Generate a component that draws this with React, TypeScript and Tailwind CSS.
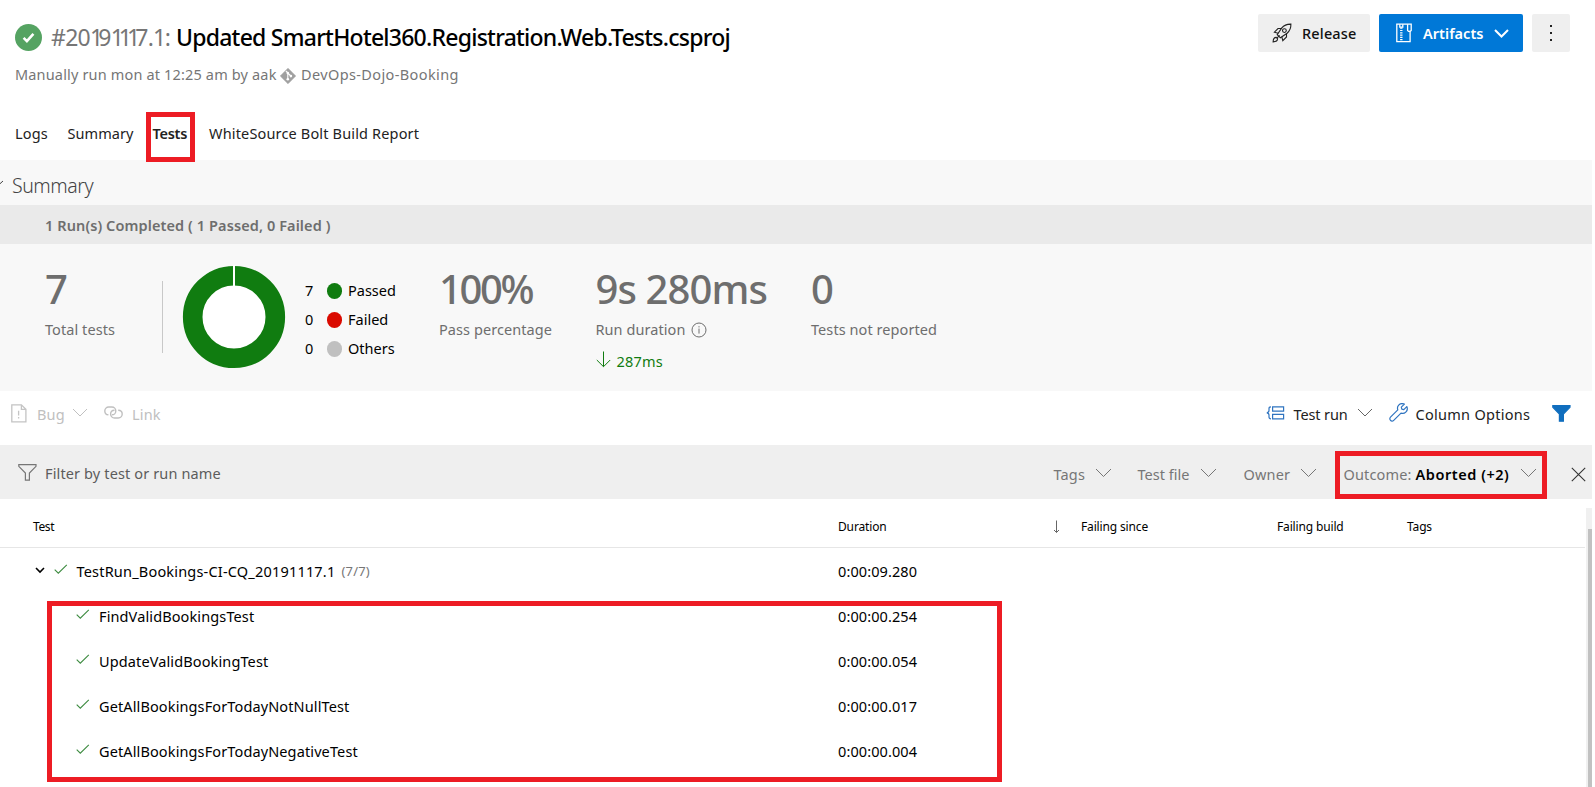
import type { ReactNode } from "react";

function Chevron({ className = "", w = 14, h = 7, sw = 1 }: { className?: string; w?: number; h?: number; sw?: number }) {
  return (
    <svg className={`shrink-0 ${className}`} width={w + 2} height={h + 3} viewBox={`-1 -1 ${w + 2} ${h + 3}`} fill="none" stroke="currentColor" strokeWidth={sw}>
      <path d={`M0 0L${w / 2} ${h}L${w} 0`} />
    </svg>
  );
}

function CheckMark({ className = "" }: { className?: string }) {
  return (
    <svg className={`shrink-0 text-[#3d8b40] ${className}`} width="14" height="11" viewBox="0 0 14 11" fill="none" stroke="currentColor" strokeWidth="1.1">
      <path d="M.7 5.6L4.3 9.2L12.8 .8" />
    </svg>
  );
}

function RocketIcon() {
  return (
    <svg className="shrink-0" width="20" height="20" viewBox="0 0 20 20" fill="none" stroke="#222" strokeWidth="1.1">
      <path d="M18.9 1.1C15.4 1 12 2.2 9.8 4.9L5.2 11.6L8.4 14.8L15.1 10.2C17.8 8 19 4.6 18.9 1.1Z" />
      <circle cx="12.4" cy="7.6" r="1.9" />
      <path d="M9.4 5.5H6L2.4 9.2L6.2 10.2M14.5 10.6V14L10.8 17.6L9.8 13.8M7.6 12.4L5.2 14.8" />
      <path d="M4.2 14.4C2.4 14.4 1.2 16 1.1 18.9C4 18.8 5.6 17.6 5.6 15.8Z" />
    </svg>
  );
}

function ArtifactIcon() {
  return (
    <svg className="shrink-0" width="16" height="20" viewBox="0 0 16 20" fill="none" stroke="#fff" strokeWidth="1.3">
      <path d="M.8 1.2H15.2V7.4L14.1 8.4V18.6H.8Z" />
      <path d="M11.6 1.2V7.4L12.6 8.4H14.1M3.8 1.2V4.2H6.8V1.2" />
      <path d="M5.3 4.6V17.6" strokeWidth="2.4" strokeDasharray="1.2 1.1" />
    </svg>
  );
}

function GitIcon() {
  return (
    <svg className="shrink-0" width="16" height="16" viewBox="0 0 16 16">
      <path d="M8 .3L15.7 8L8 15.7L.3 8Z" fill="#a0a0a0" stroke="#a0a0a0" strokeWidth=".6" strokeLinejoin="round" />
      <path d="M5.8 2.8L7.8 4.8V11.4M7.8 5L10.8 8" stroke="#fff" strokeWidth="1.1" fill="none" />
      <circle cx="7.8" cy="5" r="1.3" fill="#fff" />
      <circle cx="7.8" cy="11.3" r="1.3" fill="#fff" />
      <circle cx="10.9" cy="8.1" r="1.3" fill="#fff" />
    </svg>
  );
}

function BugFileIcon() {
  return (
    <svg className="shrink-0" width="16" height="19" viewBox="0 0 16 19" fill="none" stroke="#c4c4c4" strokeWidth="1.3">
      <path d="M.8 .8H10.4L14.9 5.3V17.9H.8ZM10.4 .8V5.3H14.9" />
      <path d="M7.6 6.8V11.4M7.6 13V14.6" />
    </svg>
  );
}

function LinkIcon() {
  return (
    <svg className="shrink-0" width="19" height="14" viewBox="0 0 19 14" fill="none" stroke="#c0c0c0" strokeWidth="1.4">
      <path d="M4.4 8.8C2.2 8.6 .8 6.9 .8 4.9C.8 2.7 2.5 1 4.7 1H7.9C10.1 1 11.8 2.7 11.8 4.9C11.8 7.1 10.1 8.8 7.9 8.8" />
      <path d="M14.2 4.2C16.6 4.2 18.2 5.9 18.2 8.1C18.2 10.3 16.5 12 14.3 12H10.5C8.3 12 6.6 10.3 6.6 8.1C6.6 5.9 8.3 4.3 10.5 4.2" />
    </svg>
  );
}

function GroupIcon() {
  return (
    <svg className="shrink-0" width="19" height="14" viewBox="0 0 19 14" fill="none" stroke="#2f74c0" strokeWidth="1.2">
      <path d="M6.6 .8H17.6V5.2H6.6ZM6.6 8.4H17.6V12.8H6.6Z" />
      <path d="M5 .8C3.4 .8 3 1.4 3 2.6V4.6C3 5.9 2.4 6.6 .8 6.8C2.4 7 3 7.7 3 9V11C3 12.2 3.4 12.8 5 12.8" />
    </svg>
  );
}

function WrenchIcon() {
  return (
    <svg className="shrink-0" width="19" height="19" viewBox="0 0 19 19" fill="none" stroke="#2f74c0" strokeWidth="1.2" strokeLinejoin="round">
      <path d="M15.4 1.1C13.4 .2 11.1 .6 9.7 2.1C8.5 3.4 8.2 5.2 8.8 6.9L1.5 14.2C.6 15.1 .6 16.6 1.5 17.4C2.3 18.3 3.8 18.3 4.7 17.4L12 10.1C13.7 10.7 15.5 10.4 16.8 9.1C18.3 7.7 18.6 5.4 17.8 3.6L14.8 6.6L12.8 6.1L12.3 4.1Z" />
    </svg>
  );
}

function FunnelIcon({ filled = false }: { filled?: boolean }) {
  return (
    <svg className="shrink-0" width="19" height="17" viewBox="0 0 19 17" fill={filled ? "#106ebe" : "none"} stroke={filled ? "#106ebe" : "#767676"} strokeWidth="1.2">
      <path d="M.8 .7H18V2.3L11.4 9V16.2H7.4V9L.8 2.3Z" />
    </svg>
  );
}

function DonutChart() {
  return (
    <svg className="shrink-0" width="104" height="104" viewBox="0 0 104 104">
      <circle cx="52" cy="52" r="41.3" fill="#fff" stroke="#107c10" strokeWidth="19.6" />
      <path d="M52 0V21" stroke="#fff" strokeWidth="2" />
    </svg>
  );
}

function LegendRow({ count, label, dot }: { count: number; label: string; dot: string }) {
  return (
    <div className="flex h-[29.3px] items-center text-black">
      <span className="-mt-[2px] w-[21.5px]">{count}</span>
      <span className={`mr-[6.5px] h-4 w-[15px] rounded-full ${dot}`} />
      <span className="-mt-[2px] tracking-normal">{label}</span>
    </div>
  );
}

function Stat({ value, label, className, valueClass = "", children }: { value: string; label: ReactNode; className: string; valueClass?: string; children?: ReactNode }) {
  return (
    <div className={`shrink-0 pt-[25px] text-[#6e6e6e] ${className}`}>
      <div className={`text-[40px] leading-[40px] font-medium ${valueClass}`}>{value}</div>
      <div className="mt-2 flex h-6 items-center tracking-[0.07px]">{label}</div>
      {children}
    </div>
  );
}

const tests = [
  { name: "FindValidBookingsTest", duration: "0:00:00.254" },
  { name: "UpdateValidBookingTest", duration: "0:00:00.054" },
  { name: "GetAllBookingsForTodayNotNullTest", duration: "0:00:00.017" },
  { name: "GetAllBookingsForTodayNegativeTest", duration: "0:00:00.004" },
];

function One({ last = false }: { last?: boolean }) {
  return <span className={last ? "tracking-[-1.5px]" : "tracking-[-5px]"}>1</span>;
}

export default function App() {
  return (
    <div className="relative h-[787px] w-[1595px] overflow-hidden bg-white font-['Noto_Sans','Open_Sans',sans-serif] text-[14.5px] leading-6 tracking-[0.16px] whitespace-nowrap text-[#222]">
      <header className="flex h-[106px] items-start justify-between pt-[14px] pr-[25px] pl-[15px]">
        <div>
          <div className="flex h-[46px] items-center">
            <svg className="mr-[9px] shrink-0" width="27" height="27" viewBox="0 0 27 27">
              <circle cx="13.5" cy="13.5" r="13.5" fill="#55a362" />
              <path d="M8.6 13.9L11.9 17.1L18.4 9.9" fill="none" stroke="#fff" strokeWidth="2.6" />
            </svg>
            <h1 className="flex text-[23px] leading-[46px]">
              <span className="w-[125px] tracking-[-0.7px] text-[#767676]">
                #20<One />9<One /><One /><One />7.<One last />:
              </span>
              <span className="font-medium tracking-[-0.76px] text-black">Updated SmartHotel360.Registration.Web.Tests.csproj</span>
            </h1>
          </div>
          <div className="flex h-[30px] items-center pb-[2px] text-[#767676]">
            <span className="w-[265px]">Manually run mon at 12:25 am by aak</span>
            <span className="mt-[3px]">
              <GitIcon />
            </span>
            <span className="ml-[5px] tracking-[0.38px]">DevOps-Dojo-Booking</span>
          </div>
        </div>
        <div className="flex gap-[9px] text-[#111]">
          <button className="flex h-[38px] w-[112px] items-center rounded-xs bg-[#efefef] pl-[14px] font-medium">
            <RocketIcon />
            <span className="ml-[10px]">Release</span>
          </button>
          <button className="flex h-[38px] w-36 items-center rounded-xs bg-[#0078d7] pl-[17px] font-semibold text-white">
            <ArtifactIcon />
            <span className="ml-[11px] w-[71px] text-left tracking-[0.03px]">Artifacts</span>
            <Chevron className="mt-[2px]" w={13} h={6.5} sw={2} />
          </button>
          <button aria-label="More actions" className="flex h-[38px] w-[38px] flex-col items-center justify-center gap-[5px] rounded-xs bg-[#efefef]">
            <span className="size-0.5 bg-[#222]" />
            <span className="size-0.5 bg-[#222]" />
            <span className="size-0.5 bg-[#222]" />
          </button>
        </div>
      </header>

      <nav className="flex h-[54px] items-center pb-px pl-[15px]">
        <span className="w-[52.5px]">Logs</span>
        <span className="w-[85px] tracking-[0.06px]">Summary</span>
        <span className="relative w-[56.5px] font-semibold tracking-[-0.28px]">
          Tests
          <span className="absolute -top-[9px] -left-[6.5px] h-[50px] w-[49px] border-5 border-[#ed1c24]" />
        </span>
        <span>WhiteSource Bolt Build Report</span>
      </nav>

      <section className="w-[1592px] bg-[#f8f8f8]">
        <div className="flex h-[45px] items-center pt-[7px] text-[19.5px] font-light tracking-[-0.45px] text-[#444]">
          <Chevron className="-mt-1 mr-[8px] -ml-[9px]" w={11} h={5} />
          <span>Summary</span>
        </div>
        <div className="flex h-[39px] items-center bg-[#eaeaea] pl-[45px] font-semibold tracking-[0.1px] text-[#6e6e6e]">1 Run(s) Completed ( 1 Passed, 0 Failed )</div>
        <div className="flex h-[147px] pl-[45px]">
          <Stat className="w-[117px]" value="7" label="Total tests" />
          <div className="mt-[37px] h-[72px] w-px bg-[#c8c8c8]" />
          <div className="mt-[21px] ml-[19px]">
            <DonutChart />
          </div>
          <div className="mt-8 ml-[19px] w-[134px]">
            <LegendRow count={7} label="Passed" dot="bg-[#107c10]" />
            <LegendRow count={0} label="Failed" dot="bg-[#da0a00]" />
            <LegendRow count={0} label="Others" dot="bg-[#c0c0c0]" />
          </div>
          <Stat className="w-[156.5px]" value="100%" valueClass="tracking-[-2.4px]" label="Pass percentage" />
          <Stat
            className="w-[215.5px]"
            value="9s 280ms"
            valueClass="tracking-[-0.9px]"
            label={
              <>
                <span className="w-[95px]">Run duration</span>
                <svg className="mt-px" width="16" height="16" viewBox="0 0 16 16" fill="none" stroke="currentColor">
                  <circle cx="8" cy="8" r="7" />
                  <path d="M8 6.6V11.6M8 4.2V5.4" />
                </svg>
              </>
            }
          >
            <div className="mt-2 flex h-6 items-center tracking-[0.2px] text-[#107c10]">
              <svg className="-mt-1 mr-[6px]" width="15" height="17" viewBox="0 0 15 17" fill="none" stroke="currentColor">
                <path d="M7.5 .5V15.6M.8 9L7.5 15.7L14.2 9" />
              </svg>
              287ms
            </div>
          </Stat>
          <Stat className="" value="0" label="Tests not reported" />
        </div>
      </section>

      <div className="flex h-[54px] w-[1592px] items-center justify-between pr-[21px] pb-[9px] pl-[11px]">
        <div className="flex items-center text-[#c0c0c0]">
          <BugFileIcon />
          <span className="ml-[10px] w-[35px]">Bug</span>
          <Chevron className="-mt-px" />
          <span className="-mt-px ml-4">
            <LinkIcon />
          </span>
          <span className="ml-[9px]">Link</span>
        </div>
        <div className="flex items-center">
          <span className="-mt-[2px]">
            <GroupIcon />
          </span>
          <span className="ml-[9px] w-[63px] tracking-[-0.12px]">Test run</span>
          <Chevron className="-mt-px text-[#666]" />
          <span className="-mt-[3px] ml-4">
            <WrenchIcon />
          </span>
          <span className="ml-2 w-[136.5px] tracking-[0.28px]">Column Options</span>
          <FunnelIcon filled />
        </div>
      </div>

      <div className="flex h-[54px] w-[1592px] items-center justify-between bg-[#efefef] pt-[3px] pr-[6px] pl-[18px] text-[#767676]">
        <div className="-mt-[2px] flex items-center">
          <FunnelIcon />
          <span className="ml-2 tracking-[0.13px] text-[#5c5c5c]">Filter by test or run name</span>
        </div>
        <div className="flex items-center pt-px">
          <span className="w-[41px]">Tags</span>
          <Chevron className="-mt-px" w={15} h={7.5} />
          <span className="ml-[26px] w-[62.5px] tracking-normal">Test file</span>
          <Chevron className="-mt-px" w={15} h={7.5} />
          <span className="ml-[26.5px] w-[56px]">Owner</span>
          <Chevron className="-mt-px" w={15} h={7.5} />
          <div className="relative ml-[27px] flex items-center">
            <span className="w-[72px]">Outcome:</span>
            <span className="w-[104.5px] font-semibold tracking-[0.55px] text-black">Aborted (+2)</span>
            <Chevron className="-mt-px" w={15} h={7.5} />
            <span className="absolute -top-[11px] -left-[8.5px] h-12 w-[212px] border-5 border-[#ed1c24]" />
          </div>
          <svg className="mt-px ml-[34px]" width="15" height="15" viewBox="0 0 15 15" fill="none" stroke="#333" strokeWidth="1.1">
            <path d="M.8 .8L14.2 14.2M14.2 .8L.8 14.2" />
          </svg>
        </div>
      </div>

      <div className="flex">
        <div className="w-[1585px] text-black">
          <div className="flex h-[49px] items-center border-b border-[#e6e6e6] pt-[8px] pl-[33px] text-xs tracking-[-0.15px]">
            <span className="w-[805px] tracking-[-0.4px]">Test</span>
            <span className="w-[215px]">Duration</span>
            <svg className="-mt-px mr-[20px]" width="8" height="14" viewBox="0 0 8 14" fill="none" stroke="#666">
              <path d="M3.5 .5V12.4M1 10L3.5 12.5L6 10" />
            </svg>
            <span className="w-[196px]">Failing since</span>
            <span className="w-[130px]">Failing build</span>
            <span>Tags</span>
          </div>
          <div className="mt-px flex h-[45px] items-center pb-[2px] pl-[34.5px]">
            <Chevron className="-mt-px" w={8} h={4} sw={1.6} />
            <CheckMark className="-mt-[2px] ml-[9px]" />
            <span className="ml-[9px] w-[265px] tracking-[0.19px]">TestRun_Bookings-CI-CQ_20191117.1</span>
            <span className="w-[496.5px] text-[13px] text-[#767676]">(7/7)</span>
            <span className="tracking-[0.1px]">0:00:09.280</span>
          </div>
          <div className="relative">
            {tests.map((t) => (
              <div key={t.name} className="flex h-[45px] items-center pb-[2px] pl-[76px]">
                <CheckMark className="-mt-[3px]" />
                <span className="ml-[9px] w-[739px] tracking-[0.12px]">{t.name}</span>
                <span className="tracking-[0.1px]">{t.duration}</span>
              </div>
            ))}
            <div className="absolute top-[7px] left-[47px] h-[181px] w-[955px] border-5 border-[#ed1c24]" />
          </div>
        </div>
        <div className="mt-[9px] ml-px flex h-[279px] w-[6px] flex-col items-end bg-[#f0f0f0] pt-[21px]">
          <div className="w-1 grow bg-[#c1c1c1]" />
        </div>
      </div>
    </div>
  );
}
